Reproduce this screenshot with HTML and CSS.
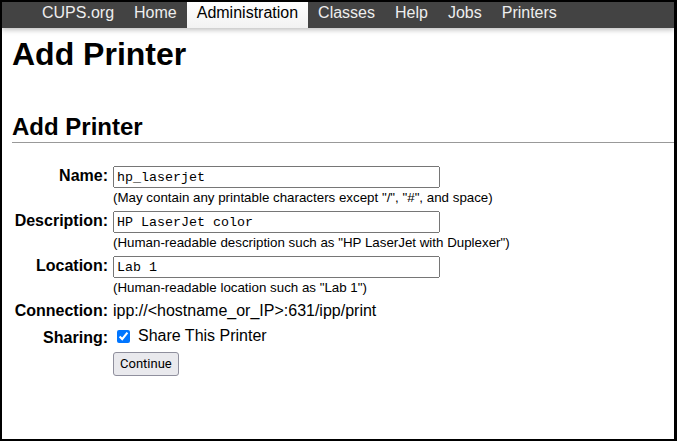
FILE: index.html
```html
<!DOCTYPE html>
<html lang="en">
<head>
<meta charset="utf-8">
<title>Add Printer - CUPS</title>
<link rel="stylesheet" href="styles.css">
</head>
<body>
<div class="window">
  <nav class="header">
    <a class="nav-link" href="#">CUPS.org</a>
    <a class="nav-link" href="#">Home</a>
    <a class="nav-link active" href="#">Administration</a>
    <a class="nav-link" href="#">Classes</a>
    <a class="nav-link" href="#">Help</a>
    <a class="nav-link" href="#">Jobs</a>
    <a class="nav-link" href="#">Printers</a>
  </nav>
  <main class="content">
    <h1 class="page-title">Add Printer</h1>
    <h2 class="section-title">Add Printer</h2>
    <form class="form">
      <div class="label">Name:</div>
      <div class="field">
        <input class="text-input" type="text" size="40" value="hp_laserjet">
        <small class="help">(May contain any printable characters except "/", "#", and space)</small>
      </div>
      <div class="label">Description:</div>
      <div class="field">
        <input class="text-input" type="text" size="40" value="HP LaserJet color">
        <small class="help">(Human-readable description such as "HP LaserJet with Duplexer")</small>
      </div>
      <div class="label">Location:</div>
      <div class="field">
        <input class="text-input" type="text" size="40" value="Lab 1">
        <small class="help">(Human-readable location such as "Lab 1")</small>
      </div>
      <div class="label row-conn">Connection:</div>
      <div class="field row-conn">ipp://&lt;hostname_or_IP&gt;:631/ipp/print</div>
      <div class="label row-share">Sharing:</div>
      <div class="field row-share"><label class="check-label"><input class="checkbox" type="checkbox" checked> Share This Printer</label></div>
      <div class="spacer"></div>
      <div class="field"><button class="button" type="button">Continue</button></div>
    </form>
  </main>
</div>
</body>
</html>
```

FILE: styles.css
```css
html, body {
  margin: 0;
  padding: 0;
  background: #000;
}

body {
  font-family: "Liberation Sans", Arial, sans-serif;
  font-size: 16px;
  color: #000;
}

.window {
  box-sizing: border-box;
  margin: 2px 3px 2px 2px;
  height: 437px;
  background: #fff;
  overflow: hidden;
}

.header {
  display: flex;
  background: #434343;
  padding-left: 30px;
  height: 26px;
  box-shadow: 0 2px 5px rgba(0, 0, 0, 0.25);
  position: relative;
  z-index: 1;
}

.nav-link {
  color: #eee;
  text-decoration: none;
  padding: 2px 10px 6px;
  line-height: 18px;
}

.nav-link.active {
  color: #000;
  background: linear-gradient(#ffffff, #f2f2f2);
}

.content {
  padding-left: 10px;
}

.page-title {
  font-size: 32px;
  font-weight: bold;
  margin: 8px 0 0;
  line-height: normal;
}

.section-title {
  font-size: 24px;
  font-weight: bold;
  margin: 40px 0 0;
  padding-bottom: 1px;
  border-bottom: 1px solid #999;
  line-height: normal;
}

.form {
  display: grid;
  grid-template-columns: 96px 1fr;
  column-gap: 5px;
  row-gap: 5px;
  align-items: baseline;
  margin-top: 23px;
}

.label {
  font-weight: bold;
  text-align: right;
}

.field {
  display: flex;
  flex-direction: column;
  align-items: flex-start;
}

.row-conn {
  margin-top: 1px;
}

.row-share {
  margin-top: 2px;
}

.text-input {
  box-sizing: border-box;
  width: 327px;
  height: 22px;
  font-family: "Liberation Mono", "Courier New", monospace;
  font-size: 13.333px;
  margin: 0;
}

.help {
  font-size: 13.333px;
  line-height: 16px;
  margin-top: 2px;
}

.check-label {
  display: flex;
  align-items: center;
  gap: 8px;
}

.checkbox {
  margin: 1px 0 0 4px;
  width: 13px;
  height: 13px;
}

.button {
  margin: 0;
  font-family: Roboto, "Noto Sans", sans-serif;
  font-size: 13px;
  line-height: 15px;
  padding: 3px 6px 4px;
  border: 1px solid #8f8f9d;
  border-radius: 3px;
  background: #e9e9ed;
  color: #000;
}
```
